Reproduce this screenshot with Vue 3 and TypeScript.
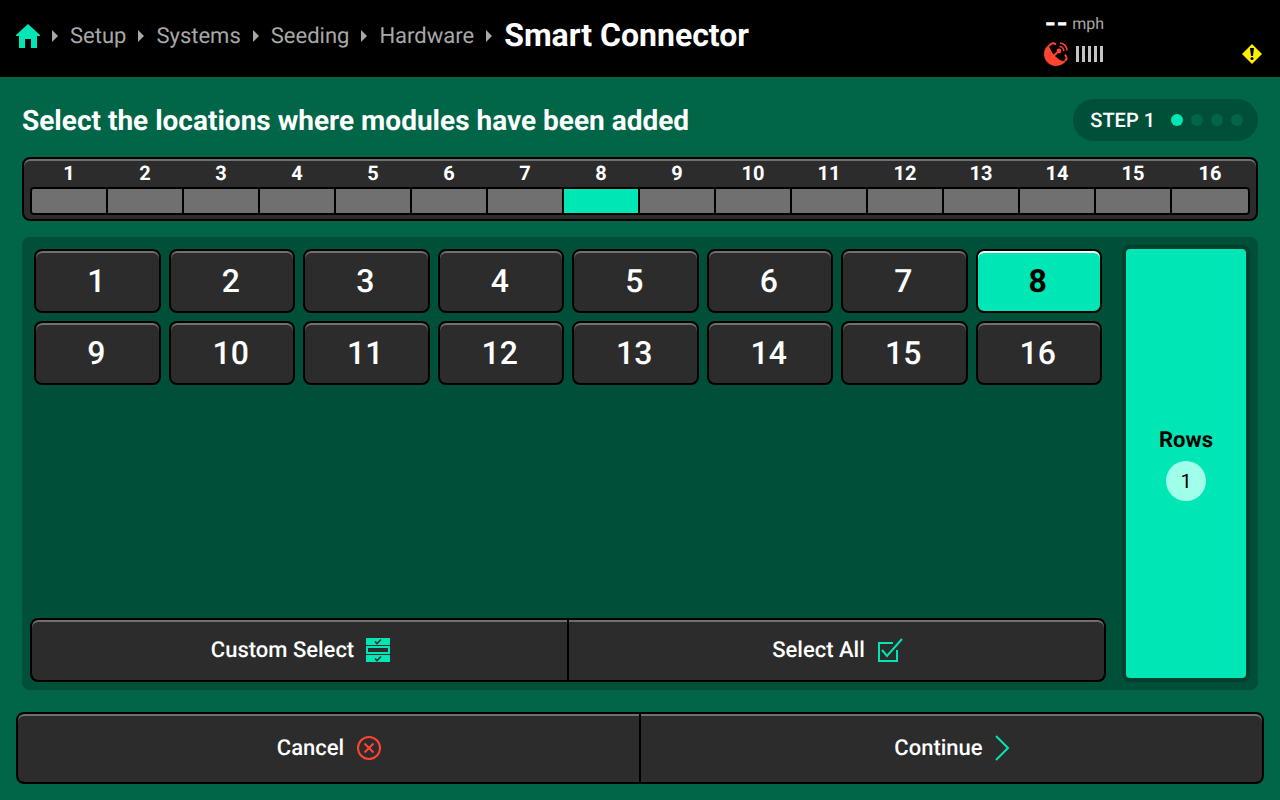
<script setup lang="ts">
import { computed, ref } from 'vue'

const crumbs: string[] = ['Setup', 'Systems', 'Seeding', 'Hardware']
const rows: number[] = Array.from({ length: 16 }, (_, i) => i + 1)
const steps: number[] = [1, 2, 3, 4]
const currentStep = 1

const selected = ref<number[]>([8])
const count = computed<number>(() => selected.value.length)

function isSelected(row: number): boolean {
  return selected.value.includes(row)
}

function toggle(row: number): void {
  selected.value = isSelected(row)
    ? selected.value.filter((r) => r !== row)
    : [...selected.value, row]
}

function selectAll(): void {
  selected.value = [...rows]
}
</script>

<template>
  <div class="screen">
    <header class="topbar">
      <nav class="crumbs" aria-label="Breadcrumb">
        <a class="home" href="#" aria-label="Home">
          <svg width="24" height="24" viewBox="0 0 24 24" aria-hidden="true">
            <path fill="currentColor" d="M12 0 24 11v1h-3v12h-6v-9H9v9H3V12H0v-1z" />
          </svg>
        </a>
        <template v-for="crumb in crumbs" :key="crumb">
          <svg class="arrow" width="6" height="12" viewBox="0 0 6 12" aria-hidden="true">
            <path fill="currentColor" d="M0 0 6 6 0 12z" />
          </svg>
          <a class="crumb" href="#">{{ crumb }}</a>
        </template>
        <svg class="arrow" width="6" height="12" viewBox="0 0 6 12" aria-hidden="true">
          <path fill="currentColor" d="M0 0 6 6 0 12z" />
        </svg>
        <h1 class="title">Smart Connector</h1>
      </nav>
      <div class="status">
        <div class="readings">
          <div class="speed"><span class="value">--</span><span class="unit">mph</span></div>
          <div class="gps">
            <svg width="24" height="24" viewBox="0 0 24 24" aria-label="GPS" role="img">
              <path fill="#ff4530" d="M5 2.500C2 4.500 0 8 0 12c0 6.600 5.400 12 12 12 4.200 0 7.900-2 10-5.200C18.500 20 14.500 17.500 11.500 14.500 7.500 10.500 5 6 5 2.500z" />
              <path fill="none" stroke="#ff4530" stroke-width="2" d="M5.500 4C6.500 .8 9.500 .8 12 2.500M21 12.500C23.200 15.500 23.500 17.800 20.500 18.500M10 13.500l5-4.500" />
              <circle cx="15" cy="9" r="2.400" fill="#ff4530" />
              <path fill="none" stroke="#ff4530" stroke-width="1.600" d="M15.500 4.500a4.500 4.500 0 0 1 4.300 4.500M16 1a7.500 7.500 0 0 1 7 7.500" />
            </svg>
            <svg width="28" height="16" viewBox="0 0 28 16" aria-label="Signal" role="img">
              <path stroke="#c4c4c4" stroke-width="3" d="M1.500 0v16M7.500 0v16M13.500 0v16M19.500 0v16M25.500 0v16" />
            </svg>
          </div>
        </div>
        <svg class="warning" width="20" height="20" viewBox="0 0 20 20" aria-label="Warning" role="img">
          <path fill="#ffee00" d="M10 0 20 10 10 20 0 10z" />
          <path fill="#000" d="M8 4h4l-1 8H9z" />
          <circle cx="10" cy="14.500" r="1.500" fill="#000" />
        </svg>
      </div>
    </header>

    <main class="content">
      <div class="heading">
        <h2 class="prompt">Select the locations where modules have been added</h2>
        <div class="step">
          <span>STEP {{ currentStep }}</span>
          <span class="dots">
            <i v-for="s in steps" :key="s" class="dot" :class="{ on: s === currentStep }"></i>
          </span>
        </div>
      </div>

      <div class="strip">
        <div class="labels">
          <span v-for="row in rows" :key="row" class="label">{{ row }}</span>
        </div>
        <div class="cells">
          <span v-for="row in rows" :key="row" class="cell" :class="{ on: isSelected(row) }"></span>
        </div>
      </div>

      <section class="panel">
        <div class="picker">
          <div class="grid">
            <button
              v-for="row in rows"
              :key="row"
              type="button"
              class="tile"
              :class="{ on: isSelected(row) }"
              :aria-pressed="isSelected(row)"
              @click="toggle(row)"
            >{{ row }}</button>
          </div>
          <div class="bar">
            <button type="button" class="action">
              <span class="caption">Custom Select</span>
              <svg width="24" height="24" viewBox="0 0 24 24" aria-hidden="true">
                <path fill="#00e6b4" d="M0 0h24v7H0zM0 17h24v7H0zM0 8h24v8H0z" />
                <path fill="#2c2c2c" d="M2 10h20v4H2z" />
                <path fill="none" stroke="#2c2c2c" stroke-width="1.600" d="M9 3.500l2 2 4-4M9 20.500l2 2 4-4" />
              </svg>
            </button>
            <button type="button" class="action" @click="selectAll">
              <span class="caption">Select All</span>
              <svg width="26" height="24" viewBox="0 0 26 24" aria-hidden="true">
                <path fill="none" stroke="#00e6b4" stroke-width="2" d="M16 5H2v18h18V12M5 12l5 6L25 1" />
              </svg>
            </button>
          </div>
        </div>
        <button type="button" class="rows">
          <span class="rows-label">Rows</span>
          <span class="count">{{ count }}</span>
        </button>
      </section>
    </main>

    <footer class="footer">
      <div class="bar tall">
        <button type="button" class="action">
          <span class="caption">Cancel</span>
          <svg width="26" height="26" viewBox="0 0 26 26" aria-hidden="true">
            <circle cx="13" cy="13" r="11" fill="none" stroke="#ff4530" stroke-width="2" />
            <path stroke="#ff4530" stroke-width="2" d="M8.500 8.500l9 9M17.500 8.500l-9 9" />
          </svg>
        </button>
        <button type="button" class="action">
          <span class="caption">Continue</span>
          <svg width="16" height="28" viewBox="0 0 16 28" aria-hidden="true">
            <path fill="none" stroke="#00e6b4" stroke-width="2" d="M1 2l12 12L1 26" />
          </svg>
        </button>
      </div>
    </footer>
  </div>
</template>

<style>
body {
  background: #006647;
}
</style>

<style scoped>
.screen {
  box-sizing: border-box;
  min-height: 100vh;
  display: flex;
  flex-direction: column;
  background: #006647;
  color: #fff;
  font-family: Roboto, "Liberation Sans", sans-serif;
  text-rendering: geometricPrecision;
}
.screen *,
.screen *::before {
  box-sizing: border-box;
}
button {
  font: inherit;
  color: inherit;
  padding: 0;
  cursor: pointer;
  text-rendering: inherit;
}
svg {
  display: block;
  flex: none;
}
h1,
h2 {
  margin: 0;
}
.topbar {
  display: flex;
  justify-content: space-between;
  min-height: 77px;
  padding: 0 16px;
  background: #000;
}
.crumbs {
  display: flex;
  align-items: center;
  gap: 12px;
  height: 72px;
}
.home {
  color: #00e6b4;
}
.arrow {
  color: #a8a8a8;
}
.crumb {
  padding-top: 2px;
  color: #a8a8a8;
  font-size: 22px;
  line-height: 28px;
  text-decoration: none;
}
.title {
  padding-bottom: 2px;
  font-size: 32px;
  line-height: 40px;
  font-weight: 700;
}
.status {
  display: flex;
  gap: 138px;
  padding: 12px 2px 0 0;
}
.readings {
  display: flex;
  flex-direction: column;
  gap: 6px;
  width: 60px;
}
.speed {
  display: flex;
  align-items: center;
  justify-content: flex-end;
  gap: 4px;
  height: 24px;
}
.value {
  font-size: 30px;
  line-height: 24px;
  font-weight: 700;
}
.unit {
  color: #a8a8a8;
  font-size: 16px;
  line-height: 24px;
}
.gps {
  display: flex;
  align-items: center;
  gap: 8px;
}
.warning {
  margin-top: 32px;
}
.content {
  flex: 1;
  display: flex;
  flex-direction: column;
  gap: 16px;
  padding: 22px 22px;
}
.heading {
  display: flex;
  align-items: center;
  justify-content: space-between;
}
.prompt {
  padding-top: 2px;
  font-size: 28px;
  line-height: 36px;
  font-weight: 700;
}
.step {
  display: flex;
  align-items: center;
  gap: 16px;
  height: 42px;
  padding: 0 15px 0 17px;
  border-radius: 21px;
  background: #004f38;
  font-size: 20px;
  line-height: 24px;
  font-weight: 500;
}
.dots {
  display: flex;
  gap: 8px;
}
.dot {
  width: 12px;
  height: 12px;
  border-radius: 50%;
  background: #006647;
}
.dot.on {
  background: #00e6b4;
}
.strip {
  padding: 2px 6px 4px;
  border: 2px solid #000;
  border-radius: 8px;
  background: #2c2c2c;
  box-shadow: inset 0 2px #707070;
}
.labels,
.cells {
  display: grid;
  grid-template-columns: repeat(16, 1fr);
}
.labels {
  padding: 0 2px 2px;
  font-size: 20px;
  line-height: 24px;
  font-weight: 700;
  text-align: center;
}
.label:not(:last-child) {
  padding-right: 2px;
}
.cells {
  height: 28px;
  border: 2px solid #000;
  border-radius: 4px;
  overflow: hidden;
}
.cell {
  background: #707070;
}
.cell:not(:last-child) {
  border-right: 2px solid #000;
}
.cell.on {
  background: #00e6b4;
}
.panel {
  flex: 1;
  display: flex;
  gap: 16px;
  padding: 8px;
  border-radius: 8px;
  background: #004f38;
}
.picker {
  flex: 1;
  display: flex;
  flex-direction: column;
  justify-content: space-between;
  gap: 16px;
}
.grid {
  display: grid;
  grid-template-columns: repeat(8, 1fr);
  gap: 8px;
  padding: 4px;
}
.tile {
  height: 64px;
  padding-right: 2px;
  border: 2px solid #000;
  border-radius: 8px;
  background: #2c2c2c;
  box-shadow: inset 0 2px #707070;
  font-size: 32px;
  line-height: 40px;
  font-weight: 500;
}
.tile.on {
  background: #00e6b4;
  box-shadow: inset 0 2px #fff;
  color: #000;
  font-weight: 700;
}
.bar {
  display: flex;
  gap: 2px;
  height: 64px;
  border: 2px solid #000;
  border-radius: 8px;
  background: #000;
  overflow: hidden;
}
.bar.tall {
  height: 72px;
}
.action {
  flex: 1;
  display: flex;
  align-items: center;
  justify-content: center;
  gap: 12px;
  padding-left: 2px;
  border: 0;
  background: #2c2c2c;
  box-shadow: inset 0 2px #707070;
  font-size: 22px;
  line-height: 28px;
  font-weight: 500;
}
.action:first-child {
  border-radius: 6px 0 0 6px;
}
.action:last-child {
  border-radius: 0 6px 6px 0;
}
.caption {
  padding-top: 2px;
}
.rows {
  width: 128px;
  display: flex;
  flex-direction: column;
  align-items: center;
  justify-content: center;
  gap: 6px;
  border: 4px solid #00402d;
  border-radius: 8px;
  background: #00e6b4;
  color: #000;
}
.rows-label {
  font-size: 22px;
  line-height: 29px;
  font-weight: 700;
}
.count {
  display: flex;
  align-items: center;
  justify-content: center;
  width: 40px;
  height: 40px;
  border-radius: 50%;
  background: #9fffe9;
  font-size: 20px;
}
.footer {
  padding: 0 16px 16px;
}
</style>
